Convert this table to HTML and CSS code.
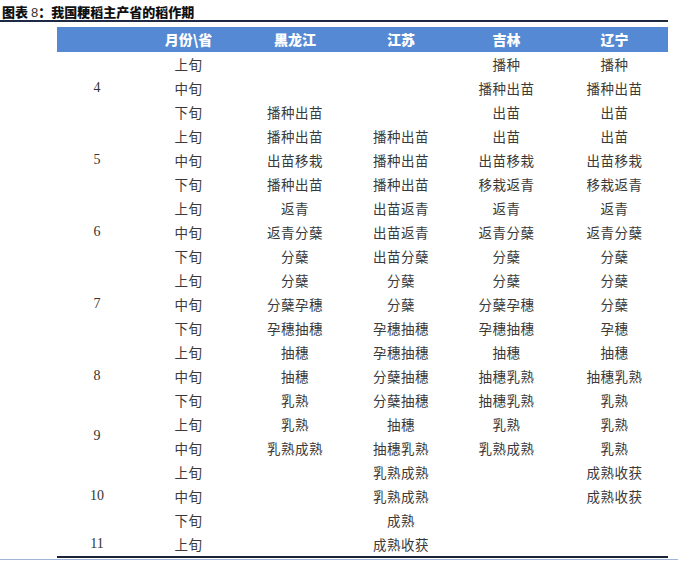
FILE: index.html
```html
<!DOCTYPE html>
<html lang="zh-CN">
<head>
<meta charset="utf-8">
<link rel="stylesheet" href="styles.css">
</head>
<body>
<div class="title"><span class="lbl">图表</span> <span class="num">8</span>：我国粳稻主产省的稻作期</div>
<div class="wrap">
<table class="crop">
<colgroup>
<col class="c-m"><col class="c-x"><col class="c-a"><col class="c-b"><col class="c-c"><col class="c-d">
</colgroup>
<thead>
<tr><th></th><th>月份\省</th><th>黑龙江</th><th>江苏</th><th>吉林</th><th>辽宁</th></tr>
</thead>
<tbody>
<tr><td class="m" rowspan="3">4</td><td>上旬</td><td></td><td></td><td>播种</td><td>播种</td></tr>
<tr><td>中旬</td><td></td><td></td><td>播种出苗</td><td>播种出苗</td></tr>
<tr><td>下旬</td><td>播种出苗</td><td></td><td>出苗</td><td>出苗</td></tr>
<tr><td class="m" rowspan="3">5</td><td>上旬</td><td>播种出苗</td><td>播种出苗</td><td>出苗</td><td>出苗</td></tr>
<tr><td>中旬</td><td>出苗移栽</td><td>播种出苗</td><td>出苗移栽</td><td>出苗移栽</td></tr>
<tr><td>下旬</td><td>播种出苗</td><td>播种出苗</td><td>移栽返青</td><td>移栽返青</td></tr>
<tr><td class="m" rowspan="3">6</td><td>上旬</td><td>返青</td><td>出苗返青</td><td>返青</td><td>返青</td></tr>
<tr><td>中旬</td><td>返青分蘖</td><td>出苗返青</td><td>返青分蘖</td><td>返青分蘖</td></tr>
<tr><td>下旬</td><td>分蘖</td><td>出苗分蘖</td><td>分蘖</td><td>分蘖</td></tr>
<tr><td class="m" rowspan="3">7</td><td>上旬</td><td>分蘖</td><td>分蘖</td><td>分蘖</td><td>分蘖</td></tr>
<tr><td>中旬</td><td>分蘖孕穗</td><td>分蘖</td><td>分蘖孕穗</td><td>分蘖</td></tr>
<tr><td>下旬</td><td>孕穗抽穗</td><td>孕穗抽穗</td><td>孕穗抽穗</td><td>孕穗</td></tr>
<tr><td class="m" rowspan="3">8</td><td>上旬</td><td>抽穗</td><td>孕穗抽穗</td><td>抽穗</td><td>抽穗</td></tr>
<tr><td>中旬</td><td>抽穗</td><td>分蘖抽穗</td><td>抽穗乳熟</td><td>抽穗乳熟</td></tr>
<tr><td>下旬</td><td>乳熟</td><td>分蘖抽穗</td><td>抽穗乳熟</td><td>乳熟</td></tr>
<tr><td class="m" rowspan="2">9</td><td>上旬</td><td>乳熟</td><td>抽穗</td><td>乳熟</td><td>乳熟</td></tr>
<tr><td>中旬</td><td>乳熟成熟</td><td>抽穗乳熟</td><td>乳熟成熟</td><td>乳熟</td></tr>
<tr><td class="m" rowspan="3">10</td><td>上旬</td><td></td><td>乳熟成熟</td><td></td><td>成熟收获</td></tr>
<tr><td>中旬</td><td></td><td>乳熟成熟</td><td></td><td>成熟收获</td></tr>
<tr><td>下旬</td><td></td><td>成熟</td><td></td><td></td></tr>
<tr><td class="m">11</td><td>上旬</td><td></td><td>成熟收获</td><td></td><td></td></tr>
</tbody>
</table>
</div>
<div class="foot"></div>
</body>
</html>
```

FILE: styles.css
```css
html, body {
  margin: 0;
  padding: 0;
  background: #ffffff;
}
body {
  width: 678px;
  height: 565px;
  overflow: hidden;
  font-family: "Noto Sans CJK SC", sans-serif;
}
.title {
  height: 22px;
  box-sizing: border-box;
  padding: 4px 0 0 2px;
  font-size: 13px;
  line-height: 16px;
  font-weight: 900;
  color: #111111;
  border-bottom: 2px solid #1e2a44;
  width: 668px;
}
.title .num {
  font-family: "Liberation Sans", sans-serif;
  font-weight: 400;
  color: #333;
}
.wrap {
  padding: 5px 10px 0 57px;
}
.crop {
  border-collapse: collapse;
  table-layout: fixed;
  width: 611px;
  border-bottom: 2px solid #1b2436;
}
.c-m { width: 80px; }
.c-x { width: 103px; }
.c-a { width: 110px; }
.c-b { width: 102px; }
.c-c { width: 109px; }
.c-d { width: 107px; }
.crop th {
  background: #5589d4;
  color: #ffffff;
  font-weight: 900;
  font-size: 14px;
  height: 25px;
  padding: 0;
  text-align: center;
  line-height: 25px;
}
.crop td {
  height: 24px;
  padding: 0;
  text-align: center;
  vertical-align: middle;
  font-size: 13.5px;
  line-height: 24px;
  letter-spacing: 0.5px;
  color: #3a3a3a;
}
.crop td.m {
  font-family: "Liberation Serif", serif;
  font-size: 14px;
  letter-spacing: 0;
  color: #333;
}
.foot {
  height: 1px;
  width: 678px;
  background: #9fb6d8;
  margin-top: 1px;
}
```
